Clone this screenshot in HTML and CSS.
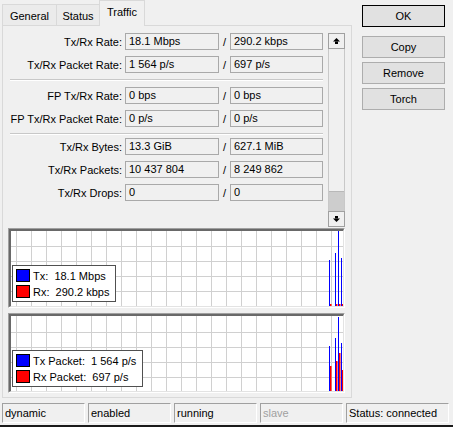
FILE: index.html
```html
<!DOCTYPE html>
<html>
<head>
<meta charset="utf-8">
<link rel="stylesheet" href="styles.css">
</head>
<body>
<div class="window">
  <div class="main">
    <div class="left">
      <div class="tabs">
        <div class="tab tab-general">General</div>
        <div class="tab tab-status">Status</div>
        <div class="tab tab-traffic active">Traffic</div>
      </div>
      <div class="panel">
        <div class="fields">
          <div class="rows">
            <div class="row"><span class="label">Tx/Rx Rate:</span><span class="field f1">18.1 Mbps</span><span class="slash">/</span><span class="field f2">290.2 kbps</span></div>
            <div class="row"><span class="label">Tx/Rx Packet Rate:</span><span class="field f1">1 564 p/s</span><span class="slash">/</span><span class="field f2">697 p/s</span></div>
            <div class="sep"></div>
            <div class="row"><span class="label">FP Tx/Rx Rate:</span><span class="field f1">0 bps</span><span class="slash">/</span><span class="field f2">0 bps</span></div>
            <div class="row"><span class="label">FP Tx/Rx Packet Rate:</span><span class="field f1">0 p/s</span><span class="slash">/</span><span class="field f2">0 p/s</span></div>
            <div class="sep sep-tight"></div>
            <div class="row"><span class="label">Tx/Rx Bytes:</span><span class="field f1">13.3 GiB</span><span class="slash">/</span><span class="field f2">627.1 MiB</span></div>
            <div class="row"><span class="label">Tx/Rx Packets:</span><span class="field f1">10 437 804</span><span class="slash">/</span><span class="field f2">8 249 862</span></div>
            <div class="row"><span class="label">Tx/Rx Drops:</span><span class="field f1">0</span><span class="slash">/</span><span class="field f2">0</span></div>
          </div>
          <div class="scrollbar">
            <div class="sb-btn"><svg width="7" height="6" viewBox="0 0 7 6"><polygon points="3.5,0 7,3.5 0,3.5" fill="#000"/><rect x="2" y="3.5" width="3" height="2.5" fill="#000"/></svg></div>
            <div class="sb-track"><div class="sb-thumb"></div></div>
            <div class="sb-btn"><svg width="7" height="6" viewBox="0 0 7 6"><polygon points="3.5,6 7,2.5 0,2.5" fill="#000"/><rect x="2" y="0" width="3" height="2.5" fill="#000"/></svg></div>
          </div>
        </div>
        <div class="graph">
          <div class="graph-in">
            <svg class="plot" width="332" height="75" viewBox="0 0 332 75">
              <path class="grid" d="M5.5 0V75M20.5 0V75M35.5 0V75M50.5 0V75M65.5 0V75M80.5 0V75M95.5 0V75M110.5 0V75M125.5 0V75M140.5 0V75M155.5 0V75M170.5 0V75M185.5 0V75M200.5 0V75M215.5 0V75M230.5 0V75M245.5 0V75M260.5 0V75M275.5 0V75M290.5 0V75M305.5 0V75M320.5 0V75M0 15.5H332M0 30.5H332M0 45.5H332M0 60.5H332"/>
              <rect x="318" y="29" width="1" height="46" fill="#0000ff"/>
              <rect x="324" y="22" width="1" height="53" fill="#0000ff"/>
              <rect x="327" y="0" width="1" height="75" fill="#0000ff"/>
              <rect x="330" y="27" width="1" height="48" fill="#0000ff"/>
              <rect x="319" y="73" width="1.5" height="2" fill="#ff0000"/>
              <rect x="325" y="73" width="1.5" height="2" fill="#ff0000"/>
              <rect x="328" y="73" width="1.5" height="2" fill="#ff0000"/>
              <rect x="331" y="73" width="1.5" height="2" fill="#ff0000"/>
            </svg>
          </div>
          <div class="legend">
            <div class="leg-row"><span class="swatch blue"></span><span>Tx:  18.1 Mbps</span></div>
            <div class="leg-row"><span class="swatch red"></span><span>Rx:  290.2 kbps</span></div>
          </div>
        </div>
        <div class="graph graph2">
          <div class="graph-in">
            <svg class="plot" width="332" height="75" viewBox="0 0 332 75">
              <path class="grid" d="M5.5 0V75M20.5 0V75M35.5 0V75M50.5 0V75M65.5 0V75M80.5 0V75M95.5 0V75M110.5 0V75M125.5 0V75M140.5 0V75M155.5 0V75M170.5 0V75M185.5 0V75M200.5 0V75M215.5 0V75M230.5 0V75M245.5 0V75M260.5 0V75M275.5 0V75M290.5 0V75M305.5 0V75M320.5 0V75M0 16.5H332M0 31.5H332M0 46.5H332M0 61.5H332"/>
              <rect x="318" y="30" width="1" height="45" fill="#0000ff"/>
              <rect x="324" y="22" width="1" height="53" fill="#0000ff"/>
              <rect x="327" y="1" width="1" height="74" fill="#0000ff"/>
              <rect x="330" y="27" width="1" height="48" fill="#0000ff"/>
              <rect x="319" y="50" width="1.5" height="25" fill="#ff0000"/>
              <rect x="325" y="45" width="1.5" height="30" fill="#ff0000"/>
              <rect x="328" y="37" width="1.5" height="38" fill="#ff0000"/>
              <rect x="331" y="54" width="1.5" height="21" fill="#ff0000"/>
            </svg>
          </div>
          <div class="legend">
            <div class="leg-row"><span class="swatch blue"></span><span>Tx Packet:  1 564 p/s</span></div>
            <div class="leg-row"><span class="swatch red"></span><span>Rx Packet:  697 p/s</span></div>
          </div>
        </div>
      </div>
    </div>
    <div class="buttons">
      <div class="btn default">OK</div>
      <div class="btn">Copy</div>
      <div class="btn">Remove</div>
      <div class="btn">Torch</div>
    </div>
  </div>
  <div class="statusbar">
    <div class="cell">dynamic</div>
    <div class="cell">enabled</div>
    <div class="cell">running</div>
    <div class="cell disabled">slave</div>
    <div class="cell wide">Status: connected</div>
  </div>
  <div class="frame-bottom"></div>
</div>
</body>
</html>
```

FILE: styles.css
```css
html, body {
  margin: 0;
  padding: 0;
}
body {
  background: #f0f0f0;
  font-family: "Liberation Sans", Arial, sans-serif;
  font-size: 11px;
  color: #000;
}
.window {
  width: 453px;
  height: 427px;
  display: flex;
  flex-direction: column;
  overflow: hidden;
}
.main {
  display: flex;
  height: 400px;
}
.left {
  margin-left: 2px;
  width: 350px;
  display: flex;
  flex-direction: column;
}
.tabs {
  height: 25px;
  display: flex;
  align-items: flex-end;
}
.tab {
  height: 21px;
  box-sizing: border-box;
  border: 1px solid #d9d9d9;
  border-bottom: none;
  background: #ebebeb;
  display: flex;
  align-items: center;
  justify-content: center;
  padding-top: 1px;
}
.tab + .tab {
  margin-left: -1px;
}
.tab-general { width: 55px; }
.tab-status { width: 44px; }
.tab-traffic { width: 46px; }
.tab.active {
  height: 26px;
  margin-bottom: -1px;
  background: #f0f0f0;
  position: relative;
  z-index: 1;
  align-items: flex-start;
  padding-top: 5px;
}
.panel {
  height: 373px;
  box-sizing: border-box;
  border: 1px solid #d9d9d9;
  padding: 6px 6px 0 5px;
  display: flex;
  flex-direction: column;
}
.fields {
  height: 196px;
  display: flex;
}
.rows {
  width: 315px;
  padding-top: 1px;
}
.row {
  display: flex;
  align-items: center;
  height: 17px;
  margin-bottom: 6px;
}
.label {
  width: 117px;
  box-sizing: border-box;
  padding-right: 3px;
  text-align: right;
  white-space: nowrap;
}
.field {
  box-sizing: border-box;
  height: 17px;
  border: 1px solid #a9a9a9;
  padding-left: 3px;
  line-height: 15px;
  white-space: nowrap;
  overflow: hidden;
}
.f1 { width: 94px; }
.f2 { width: 93px; }
.slash {
  width: 11px;
  text-align: center;
}
.sep {
  height: 0;
  border-top: 1px solid #c8c8c8;
  border-bottom: 1px solid #ffffff;
  margin: 2px 0 6px 2px;
}
.sep-tight {
  margin: 1px 0 3px 2px;
}
.scrollbar {
  margin: 1px 0 1px 5px;
  width: 17px;
  display: flex;
  flex-direction: column;
}
.sb-btn {
  height: 16px;
  box-sizing: border-box;
  border: 1px solid #a0a0a0;
  background: #f0f0f0;
  display: flex;
  align-items: center;
  justify-content: center;
}
.sb-btn svg { display: block; }
.sb-track {
  flex: 1;
  display: flex;
  flex-direction: column;
  justify-content: flex-end;
  border-left: 1px solid #c8c8c8;
  border-right: 1px solid #c8c8c8;
  background: #f0f0f0;
}
.sb-thumb {
  height: 20px;
  box-sizing: border-box;
  background: #cdcdcd;
  border-top: 1px solid #b8b8b8;
}
.graph {
  height: 80px;
  box-sizing: border-box;
  border-style: solid;
  border-width: 1px;
  border-color: #a0a0a0 #ffffff #ffffff #a0a0a0;
  position: relative;
}
.graph2 {
  margin-top: 5px;
}
.graph-in {
  height: 100%;
  box-sizing: border-box;
  border-style: solid;
  border-width: 2px 1px 1px 2px;
  border-color: #696969 #e3e3e3 #e3e3e3 #696969;
  background: #ffffff;
}
.plot {
  display: block;
}
.grid {
  stroke: #d0d0d0;
  stroke-width: 1;
  fill: none;
}
.legend {
  position: absolute;
  left: 3px;
  bottom: 5px;
  background: #ffffff;
  border: 1px solid #505050;
  padding: 3px 6px 3px 3px;
  display: flex;
  flex-direction: column;
  gap: 3px;
}
.leg-row {
  display: flex;
  align-items: center;
  height: 13px;
  white-space: pre;
}
.swatch {
  width: 12px;
  height: 11px;
  border: 1px solid #000;
  margin-right: 3px;
}
.swatch.blue { background: #0000ff; }
.swatch.red { background: #ff0000; }
.buttons {
  margin-left: 10px;
  padding-top: 5px;
  width: 83px;
  display: flex;
  flex-direction: column;
}
.btn {
  height: 22px;
  box-sizing: border-box;
  border: 1px solid #adadad;
  background: #e1e1e1;
  display: flex;
  align-items: center;
  justify-content: center;
  margin-bottom: 4px;
}
.btn.default {
  border-color: #000;
  margin-bottom: 9px;
}
.statusbar {
  display: flex;
  gap: 3px;
  padding: 3px 0 0 2px;
}
.cell {
  width: 83px;
  height: 20px;
  box-sizing: border-box;
  border-style: solid;
  border-width: 1px;
  border-color: #a0a0a0 #ffffff #ffffff #a0a0a0;
  padding-left: 2px;
  line-height: 18px;
  white-space: nowrap;
}
.cell.disabled { color: #a0a0a0; }
.cell.wide { width: 103px; }
.frame-bottom {
  height: 2px;
  margin-top: 2px;
  background: #1a1a1a;
}
```
